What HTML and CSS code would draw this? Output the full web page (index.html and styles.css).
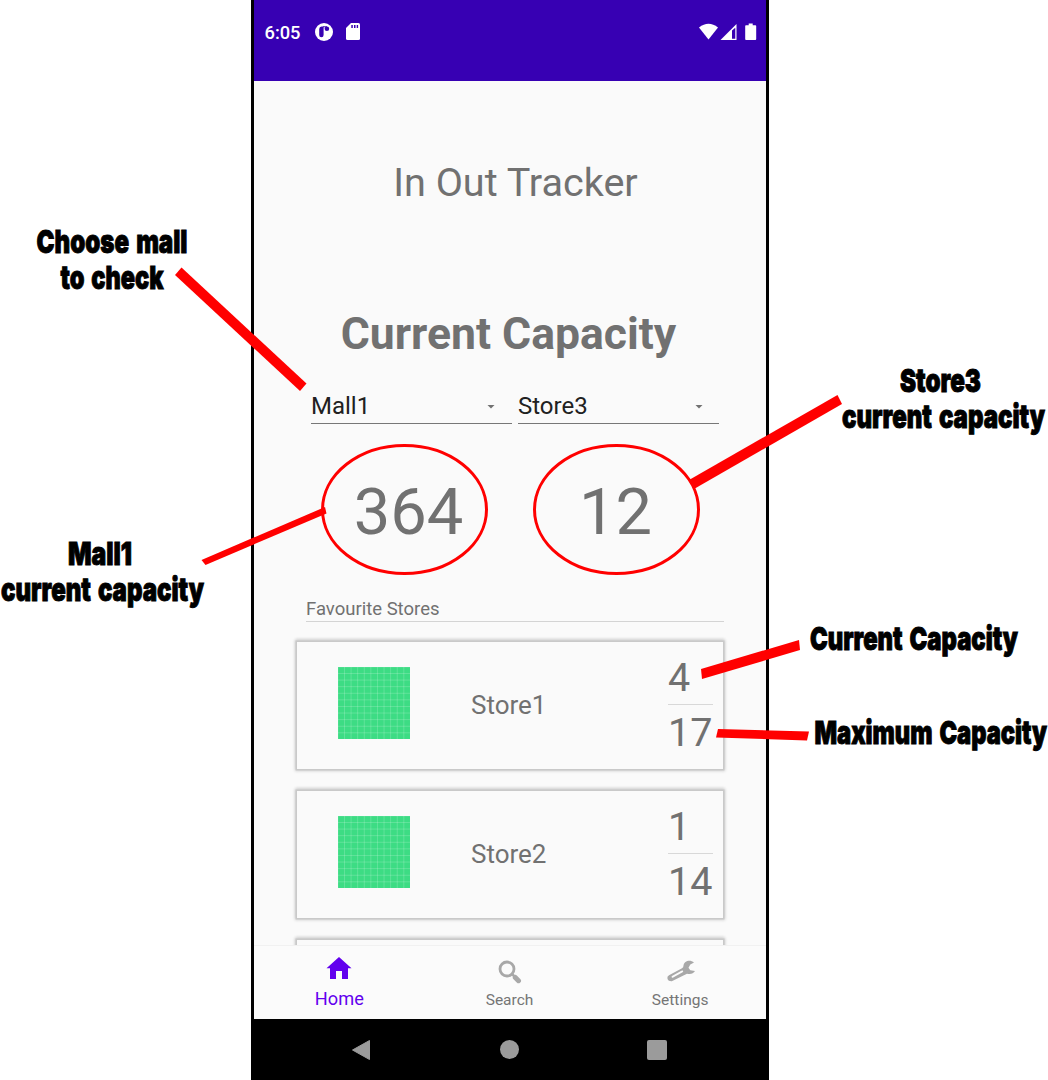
FILE: index.html
```html
<!DOCTYPE html>
<html lang="en">
<head>
<meta charset="utf-8">
<title>In Out Tracker</title>
<link rel="stylesheet" href="styles.css">
</head>
<body>
<div class="stage">
  <div class="phone">
    <header class="status">
      <span class="clock">6:05</span>
      <svg class="status-app" width="18" height="18" viewBox="0 0 18 18"><circle cx="9" cy="9" r="9" fill="#fff"/><path d="M8.600 3.500V12a2.200 2.200 0 0 1-4.400 0V6q0-2.500 2.400-2.500z" fill="#3700b3"/><circle cx="11.900" cy="5.800" r="2.300" fill="#3700b3"/><path d="M8 3.300h4v1H8z" fill="#3700b3"/></svg>
      <svg class="status-card" width="14" height="17" viewBox="0 0 14 17"><path d="M5 0h7.500Q14 0 14 1.500v14q0 1.500-1.500 1.500h-11Q0 17 0 15.500V5z" fill="#fff"/><path d="M5.300 2h1.500v3H5.300zM8 2h1.500v3H8zM10.700 2h1.400v3h-1.400z" fill="#3700b3"/></svg>
      <svg class="status-right" width="58" height="18" viewBox="0 0 58 18"><path d="M0 4.500Q9.500-3 19 4.500L9.500 16.500z" fill="#fff"/><path fill-rule="evenodd" d="M21.500 17 37.500 1v16zM33 7.500v8.300h3.300V4.800z" fill="#fff"/><path d="M47 2.200h2.700V.5h4v1.700h2.700q.8 0 .8.800v13q0 1-.8 1H47q-.8 0-.8-1V3q0-.8.8-.8z" fill="#fff"/></svg>
    </header>
    <main class="content">
      <h1 class="title">In Out Tracker</h1>
      <h2 class="heading">Current Capacity</h2>
      <div class="spinners">
        <div class="spinner"><span>Mall1</span><i class="arrow"></i></div>
        <div class="spinner"><span>Store3</span><i class="arrow"></i></div>
      </div>
      <div class="totals"><span>364</span><span>12</span></div>
      <div class="favourites">Favourite Stores</div>
      <section class="list">
        <article class="card"><div class="thumb"></div><span class="store">Store1</span><div class="ratio"><span>4</span><span>17</span></div></article>
        <article class="card"><div class="thumb"></div><span class="store">Store2</span><div class="ratio"><span>1</span><span>14</span></div></article>
        <article class="card"></article>
      </section>
    </main>
    <nav class="tabs">
      <div class="tab active">
        <svg width="28" height="26" viewBox="0 0 28 26"><path d="M14 2 1.500 13.200H5V24h6v-8h6v8h6V13.200h3.500z" fill="#6200ee"/></svg>
        <span>Home</span>
      </div>
      <div class="tab">
        <svg width="28" height="26" viewBox="0 0 28 26"><circle cx="12" cy="11" r="7" fill="none" stroke="#a8a8a8" stroke-width="2.800"/><path d="m17 16 3 3" stroke="#a8a8a8" stroke-width="2.500"/><path d="m20.300 19.500 3.200 3.200" stroke="#a8a8a8" stroke-width="5" stroke-linecap="round"/></svg>
        <span>Search</span>
      </div>
      <div class="tab">
        <svg width="30" height="26" viewBox="-1 0 30 26"><path fill="#a8a8a8" fill-rule="evenodd" d="M28 4.500C24 1 18 3 17.500 7.500Q17.500 9.500 16 10.300L3 17.200Q.700 18.500 1.500 21t4.300 2.300L21 15.700q5.500 1.300 8-2.700l-4.700-.700-1.800-2.500L24.300 6.500zM16.800 12.500q1 1-.2 1.700L7.200 19.400q-1.300.6-1.600-.3-.2-.8.8-1.300l9-5q.8-.5 1.400-.3z"/></svg>
        <span>Settings</span>
      </div>
    </nav>
    <footer class="system">
      <svg width="20" height="22" viewBox="0 0 20 22"><path d="M18.500 1.500v19L1.500 11z" fill="#9b9b9b" stroke="#9b9b9b" stroke-linejoin="round"/></svg>
      <i class="sys-home"></i>
      <i class="sys-recent"></i>
    </footer>
  </div>
  <svg class="notes" width="1048" height="1080" viewBox="0 0 1048 1080">
    <g class="marks">
      <path d="M181.500 267.500 306.500 383.500 300 391 175 275z"/>
      <path d="M201.500 560 325 507l1.500 6.500L205.500 565z"/>
      <path d="m837.500 395 4.500 9-148 85-5-9z"/>
      <path d="m701 669 98-29 1 10-98 29z"/>
      <path d="m718 729 91 2.500-2 9-91-3z"/>
    </g>
    <g class="rings">
      <ellipse cx="404.500" cy="509.500" rx="82" ry="64"/>
      <ellipse cx="616.500" cy="509.500" rx="82" ry="64"/>
    </g>
    <g class="labels">
      <text x="36.500" y="252.500" textLength="151" lengthAdjust="spacingAndGlyphs">Choose mall</text>
      <text x="60.500" y="288.500" textLength="103" lengthAdjust="spacingAndGlyphs">to check</text>
      <text x="68" y="564.500" textLength="64" lengthAdjust="spacingAndGlyphs">Mall1</text>
      <text x="1" y="600.500" textLength="203" lengthAdjust="spacingAndGlyphs">current capacity</text>
      <text x="900" y="391.500" textLength="81" lengthAdjust="spacingAndGlyphs">Store3</text>
      <text x="842" y="427.500" textLength="203" lengthAdjust="spacingAndGlyphs">current capacity</text>
      <text x="810" y="650" textLength="208" lengthAdjust="spacingAndGlyphs">Current Capacity</text>
      <text x="814.500" y="744" textLength="232.500" lengthAdjust="spacingAndGlyphs">Maximum Capacity</text>
    </g>
  </svg>
</div>
</body>
</html>
```
FILE: styles.css
```css
* { box-sizing: border-box; }
body { margin: 0; background: #fff; font-family: Roboto, sans-serif; color: #717171; }
.stage { position: relative; width: 1048px; height: 1080px; }
.phone {
  width: 518px; height: 1080px; margin-left: 251px;
  display: flex; flex-direction: column;
  background: #fafafa; border: solid #000; border-width: 0 3px;
}
.status {
  height: 81px; flex: none; display: flex; align-items: flex-start;
  padding: 23px 9px 0 10.500px; background: #3700b3; color: #fff;
}
.clock { width: 50px; font-size: 18.300px; font-weight: 500; line-height: 20px; }
.status-card { margin-left: 13px; }
.status-right { margin-left: auto; }
.content { height: 864px; flex: none; overflow: hidden; padding: 78px 41px 0; }
.title { margin: 0; padding-left: 11px; text-align: center; font-size: 39.600px; line-height: 47px; font-weight: 400; }
.heading { margin: 103px 3px 0 0; text-align: center; font-size: 44.500px; line-height: 50px; font-weight: 700; }
.spinners { display: grid; grid-template-columns: 201px 201px; gap: 6px; margin: 29px 0 0 16px; }
.spinner {
  height: 36px; display: flex; align-items: center; justify-content: space-between;
  padding-right: 16px; border-bottom: 1.500px solid #777;
  font-size: 24px; line-height: 34px; color: #212121;
}
.spinner:first-child { padding-right: 17px; }
.arrow { width: 8px; height: 4px; margin-top: 2px; background: #717171; clip-path: polygon(0 0, 100% 0, 50% 100%); }
.totals {
  display: grid; grid-template-columns: 208px 206px; margin: 49px 0 0 9.500px;
  text-align: center; font-size: 65px; line-height: 78px;
}
.favourites {
  margin: 46px 1px 0 11px; border-bottom: 1px solid #d4d4d4;
  font-size: 18.500px; line-height: 24px;
}
.list { display: flex; flex-direction: column; gap: 22px; padding: 20px 2px 0; }
.card {
  height: 127px; display: grid; grid-template-columns: 72px 1fr 45px; align-items: center;
  padding: 0 10px 1px 41px; background: #fafafa;
  box-shadow: 0 0 0 1.500px #c9c9c9, 0 0 3px 2px #ccc, 0 -2px 3px 1px #ddd;
}
.thumb {
  width: 72px; height: 72px; background-color: #3ddc84; margin-top: -4px;
  background-image:
    linear-gradient(90deg, rgba(255,255,255,.18) 1px, transparent 1px),
    linear-gradient(rgba(255,255,255,.18) 1px, transparent 1px);
  background-size: 6.600px 6.600px; background-position: 6px 6px;
}
.store { padding-left: 61px; margin-top: -1px; font-size: 26px; line-height: 30px; }
.ratio { display: flex; flex-direction: column; margin-top: -1px; font-size: 39.500px; line-height: 52px; }
.ratio span { padding-top: 2px; }
.ratio span + span { border-top: 1px solid #d8d8d8; }
.tabs {
  height: 73.500px; flex: none; display: grid; grid-template-columns: repeat(3, 1fr);
  padding-top: 10px; background: #fbfbfb; border-top: 1px solid #f1f1f1;
}
.tab { display: flex; flex-direction: column; align-items: center; gap: 5px; padding-right: 1px; font-size: 15.500px; line-height: 22px; color: #757575; }
.tab svg { margin-top: 2px; }
.active { gap: 7px; padding: 0; font-size: 18.200px; color: #6200ee; }
.active svg { margin-top: -1px; }
.system {
  flex: 1; display: flex; align-items: center; justify-content: space-between;
  padding: 1px 99px 0 97px; background: #000;
}
.sys-home { width: 19px; height: 19px; margin-left: 1px; border-radius: 50%; background: #9b9b9b; }
.sys-recent { width: 20px; height: 20px; border-radius: 2px; background: #9b9b9b; }
.notes { position: absolute; left: 0; top: 0; overflow: visible; }
.marks { fill: #f00; }
.rings { fill: none; stroke: #f00; stroke-width: 3; }
.labels {
  font-family: Inter, sans-serif; font-size: 32px; font-weight: 900; word-spacing: 3px;
  fill: #000; stroke: #000; stroke-width: 1px;
}
```
